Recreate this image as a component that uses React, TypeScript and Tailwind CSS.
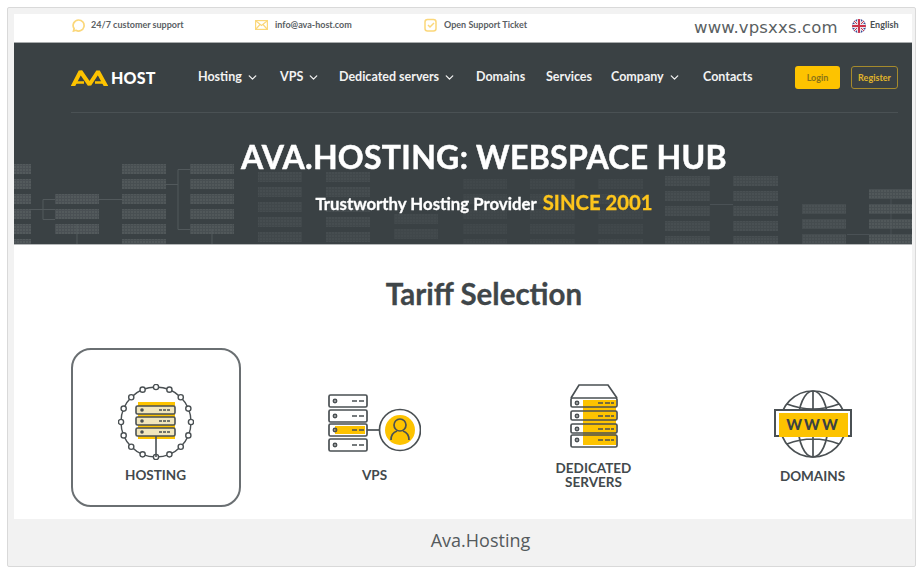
import React from "react";
import { ChevronDown } from "lucide-react";

const dark = "#3a4144";
const yellow = "#fdc300";

const navLinks = [
  { label: "Hosting", cls: "w-[82px]", arrow: true },
  { label: "VPS", cls: "w-[59px]", arrow: true },
  { label: "Dedicated servers", cls: "w-[137px]", arrow: true },
  { label: "Domains", cls: "w-[70px]", arrow: false },
  { label: "Services", cls: "w-[65px]", arrow: false },
  { label: "Company", cls: "w-[92px]", arrow: true },
  { label: "Contacts", cls: "w-[92px]", arrow: false },
];

// server blocks in the hero background: x, width, first y, rows, opacity
const blockCols = [
  [0, 17, 121, 7, 0.5],
  [41, 44, 151, 3, 0.5],
  [108, 44, 121, 7, 0.45],
  [176, 44, 121, 5, 0.45],
  [244, 44, 129, 6, 0.24],
  [312, 44, 129, 6, 0.24],
  [380, 44, 171, 2, 0.18],
  [449, 44, 136, 5, 0.14],
  [516, 45, 136, 5, 0.14],
  [584, 45, 136, 5, 0.14],
  [651, 45, 133, 5, 0.26],
  [719, 45, 133, 5, 0.3],
  [788, 44, 161, 3, 0.34],
  [855, 43, 146, 4, 0.45],
];

function HeroPattern() {
  return (
    <svg className="absolute left-0 top-0" width="898" height="201" viewBox="0 0 898 201">
      <defs>
        <pattern id="cells" width="3" height="3" patternUnits="userSpaceOnUse">
          <rect width="3" height="3" fill="#596063" />
          <rect width="2" height="2" fill="#6c7375" />
        </pattern>
      </defs>
      {blockCols.map(([x, w, y, rows, op], i) =>
        Array.from({ length: rows }).map((_, r) => (
          <rect key={`${i}-${r}`} x={x} y={y + r * 15} width={w} height={10} fill="url(#cells)" opacity={op} />
        ))
      )}
      <g fill="none" stroke="#596063" strokeWidth="1" opacity="0.8">
        <path d="M17 166.500H29M29 156.500V176.500M29 156.500H41M29 166.500H41M29 176.500H41" />
        <path d="M85 156.500H108M152 141.500H164M164 126.500V186.500M164 126.500H176M164 186.500H176M63 181V201M198 186V201" />
        <path d="M696 161.500H719M833 191.500H855M877 156V201" opacity="0.7" />
      </g>
    </svg>
  );
}

function HostingIcon() {
  const nodes = Array.from({ length: 16 }).map((_, i) => {
    const a = (i * Math.PI * 2) / 16;
    return [38 + 35 * Math.cos(a), 38 + 35 * Math.sin(a)];
  });
  return (
    <svg width="76" height="76" viewBox="0 0 76 76" fill="none" stroke="#4a5053" strokeWidth="1.400">
      <circle cx="38" cy="38" r="35" />
      {nodes.map(([x, y], i) => (
        <circle key={i} cx={x} cy={y} r="2.600" fill="#fff" />
      ))}
      <rect x="20" y="18" width="37" height="37" fill={yellow} stroke="none" />
      {[22, 33, 44].map((y) => (
        <g key={y}>
          <rect x="18" y={y} width="39" height="8" rx="1.500" fill="#f1e6bd" strokeWidth="1.600" />
          <circle cx="24" cy={y + 4} r="1.800" fill="#4a5053" stroke="none" />
          <path d={`M41 ${y + 4}h3M45 ${y + 4}h3M49 ${y + 4}h3`} />
        </g>
      ))}
      <path d="M38 52V73" strokeWidth="1.600" />
    </svg>
  );
}

function VpsIcon() {
  return (
    <svg width="93" height="58" viewBox="0 0 93 58" fill="none" stroke="#4a5053" strokeWidth="1.700">
      {[1, 16, 30, 45].map((y) => (
        <g key={y}>
          <rect x="1" y={y} width="38" height="12" rx="1.500" fill="#fff" />
          {y === 30 && <rect x="7" y={y + 2} width="30" height="8" fill={yellow} stroke="none" />}
          <circle cx="7" cy={y + 6} r="1.600" />
          <path d={`M24 ${y + 6}h5M31 ${y + 6}h5`} />
        </g>
      ))}
      <path d="M39 36H51" />
      <circle cx="72" cy="36" r="20.500" />
      <circle cx="72" cy="36" r="15" fill={yellow} stroke="none" />
      <circle cx="72" cy="31" r="6" />
      <path d="M63 46c0-6 3-8 6-9M81 46c0-6-3-8-6-9" />
    </svg>
  );
}

function DedicatedIcon() {
  const rows = [14, 27, 40, 51];
  return (
    <svg width="48" height="64" viewBox="0 0 48 64" fill="none" stroke="#4a5053" strokeWidth="1.700">
      <path d="M1 14L9 1H38L47 14" fill="#fff" />
      <rect x="1" y="14" width="46" height="49" fill="#fff" stroke="none" />
      <rect x="13" y="16" width="33" height="45" fill={yellow} stroke="none" />
      {rows.map((y) => (
        <g key={y}>
          <rect x="1" y={y} width="46" height={y === 51 ? 12 : 9} rx="1.500" />
          <circle cx="7" cy={y + 5} r="1.600" />
          <path d={`M28 ${y + 5}h5M35 ${y + 5}h5M41 ${y + 5}h3`} />
        </g>
      ))}
    </svg>
  );
}

function DomainsIcon() {
  return (
    <svg width="78" height="70" viewBox="0 0 78 70" fill="none" stroke="#4a5053" strokeWidth="1.700">
      <circle cx="39" cy="35" r="33" />
      <ellipse cx="39" cy="35" rx="15" ry="33" />
      <path d="M39 2V68M13 15Q39 25 65 15M13 55Q39 45 65 55" />
      <rect x="1" y="21" width="76" height="26" fill="#fff" strokeWidth="2" />
      <rect x="5" y="24" width="69" height="24" fill={yellow} stroke="none" />
      <text x="39" y="41" textAnchor="middle" fill="#3a4144" stroke="none" fontFamily="Lato, sans-serif" fontWeight="900" fontSize="15" letterSpacing="2">
        WWW
      </text>
    </svg>
  );
}

function FlagIcon() {
  return (
    <svg width="14" height="14" viewBox="0 0 14 14">
      <clipPath id="flagclip">
        <circle cx="7" cy="7" r="7" />
      </clipPath>
      <g clipPath="url(#flagclip)">
        <rect width="14" height="14" fill="#3a4c94" />
        <path d="M0 0L14 14M14 0L0 14" stroke="#e8e8f0" strokeWidth="3" />
        <path d="M0 0L14 14M14 0L0 14" stroke="#c9344c" strokeWidth="1" />
        <path d="M7 0V14M0 7H14" stroke="#e8e8f0" strokeWidth="4" />
        <path d="M7 0V14M0 7H14" stroke="#c9344c" strokeWidth="2" />
      </g>
    </svg>
  );
}

function AvaLogo() {
  return (
    <svg width="37" height="16" viewBox="0 0 37 16" fill="none" stroke={yellow} strokeWidth="4">
      <path d="M1.500 17L9.500 1.500 18.500 14.500 27 1.500 35.500 17" strokeLinejoin="bevel" />
      <path d="M5 12.500H13M24 12.500H32" strokeWidth="2.600" />
    </svg>
  );
}

function TopBar() {
  return (
    <div className="h-[29px] bg-white flex items-center pl-[58px] pb-[6px] text-[9px] font-bold text-[#5a6063] border-b border-[#a9acad]">
      <div className="w-[183px] flex items-center gap-[6px]">
        <svg width="13" height="13" viewBox="0 0 13 13" fill="none" stroke="#fbd77a" strokeWidth="1.700">
          <path d="M6.500 1a5.500 5.500 0 1 1-2.600 10.300L1.500 12l.6-2.400A5.500 5.500 0 0 1 6.500 1z" />
        </svg>
        <span>24/7 customer support</span>
      </div>
      <div className="w-[169px] flex items-center gap-[7px]">
        <svg width="13" height="10" viewBox="0 0 13 10" fill="none" stroke="#fbd77a" strokeWidth="1.200">
          <rect x="0.600" y="0.600" width="11.800" height="8.800" />
          <path d="M1 1l5.500 4.500L12 1M1 9l4-4.500M12 9L8 4.500" />
        </svg>
        <span>info@ava-host.com</span>
      </div>
      <div className="w-[270px] flex items-center gap-[7px]">
        <svg width="13" height="14" viewBox="0 0 13 14" fill="none" stroke="#fbd77a" strokeWidth="1.500">
          <rect x="1" y="1.500" width="11" height="11.500" rx="2.500" />
          <path d="M4 7l2 2 4-4" />
        </svg>
        <span>Open Support Ticket</span>
      </div>
      <span className="w-[158px] mt-[6px] font-['DejaVu_Sans',sans-serif] font-normal text-[16.500px] tracking-[0.15px] text-[#5a5f62] whitespace-nowrap">
        www.vpsxxs.com
      </span>
      <div className="flex items-center gap-[4px] mt-[1px] text-[#4a5053]">
        <FlagIcon />
        <span className="-mt-[2px]">English</span>
      </div>
    </div>
  );
}

function NavBar() {
  return (
    <div className="relative ml-[57px] mr-[14px] h-[70px] flex items-center border-b border-[#4a5154]">
      <div className="w-[127px] flex items-center gap-[3px]">
        <AvaLogo />
        <span className="text-white font-black text-[16px] tracking-[0.2px] leading-none">HOST</span>
      </div>
      {navLinks.map((l) => (
        <div key={l.label} className={`${l.cls} flex items-center gap-[4px] text-[#f2f2f2] font-bold text-[12.500px] whitespace-nowrap`}>
          <span>{l.label}</span>
          {l.arrow && <ChevronDown size={13} strokeWidth={2.4} />}
        </div>
      ))}
      <div className="w-[45px] h-[23px] rounded-[3px] bg-[#fdc300] text-[#8a7418] text-[9px] font-bold flex items-center justify-center">
        Login
      </div>
      <div className="ml-[11px] w-[47px] h-[23px] rounded-[3px] border border-[#a58a2c] text-[#e0b52a] text-[9px] font-bold flex items-center justify-center">
        Register
      </div>
    </div>
  );
}

function Hero() {
  return (
    <div className="relative z-10 pl-[42px] flex flex-col items-center text-center">
      <h1 className="mt-[24px] h-[40px] text-white font-bold text-[32px] leading-[40px] tracking-[0.3px] whitespace-nowrap [-webkit-text-stroke:0.5px_white]">
        AVA.HOSTING: WEBSPACE HUB
      </h1>
      <div className="mt-[10px] flex items-baseline gap-[6px] whitespace-nowrap [-webkit-text-stroke:0.3px]">
        <span className="text-white font-bold text-[16.800px]">Trustworthy Hosting Provider</span>
        <span className="text-[#fdc51c] font-bold text-[20.300px]">SINCE 2001</span>
      </div>
    </div>
  );
}

function Tile({ label, top, children, active }: { label: string; top: string; children: React.ReactNode; active?: boolean }) {
  return (
    <div className="w-[219px] shrink-0 flex justify-center">
      <div className={`w-[170px] h-[159px] rounded-[20px] flex flex-col items-center ${top} ${active ? "border-2 border-[#6a6f72]" : ""}`}>
        {children}
        <div className="mt-[8px] w-[90px] text-[13.500px] leading-[14px] font-bold text-[#42494c] text-center">{label}</div>
      </div>
    </div>
  );
}

export default function App() {
  return (
    <div className="w-[916px] h-[570px] bg-white pl-[7px] pt-[7px] overflow-hidden font-['Lato',sans-serif]">
      <div className="w-[909px] h-[560px] bg-[#f2f2f2] border border-[#d9d9d9] rounded-[2px] flex flex-col">
        <div className="mx-[6px] mt-[6px] w-[898px]">
          <TopBar />
          <div className="relative h-[201px] overflow-hidden" style={{ background: dark }}>
            <HeroPattern />
            <div className="relative z-10">
              <NavBar />
            </div>
            <Hero />
          </div>
          <div className="h-[275px] bg-white border-t border-[#b5b8b9] overflow-hidden">
            <h2 className="pt-[30px] pl-[42px] text-center text-[29.500px] leading-[38px] font-bold text-[#3f4649] [-webkit-text-stroke:0.3px_#3f4649]">Tariff Selection</h2>
            <div className="mt-[35px] flex pl-[32px]">
              <Tile label="HOSTING" top="pt-[34px]" active>
                <HostingIcon />
              </Tile>
              <Tile label="VPS" top="pt-[46px]">
                <div className="mb-[8px]">
                  <VpsIcon />
                </div>
              </Tile>
              <Tile label="DEDICATED SERVERS" top="pt-[36px]">
                <div className="mb-[5px]">
                  <DedicatedIcon />
                </div>
              </Tile>
              <Tile label="DOMAINS" top="pt-[41px]">
                <div className="mb-[2px]">
                  <DomainsIcon />
                </div>
              </Tile>
            </div>
          </div>
        </div>
        <div className="flex-1 pl-[38px] pb-[4px] flex items-center justify-center text-[18px] text-[#555a5d] font-['Open_Sans',sans-serif]">
          Ava.Hosting
        </div>
      </div>
    </div>
  );
}
